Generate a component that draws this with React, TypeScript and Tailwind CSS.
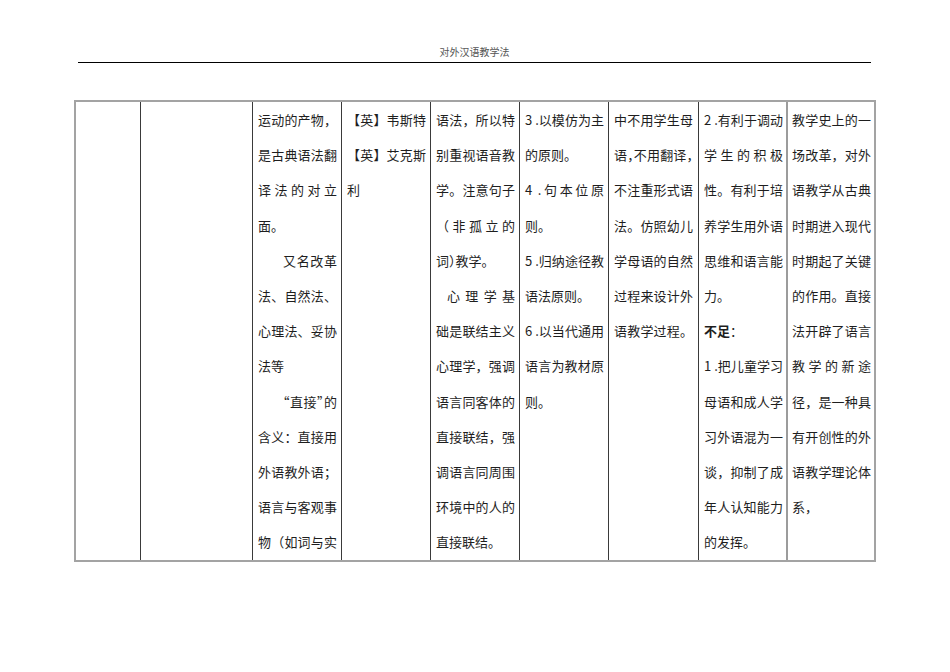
type Line = {
  t: React.ReactNode;
  j?: boolean; // stretch the line across the cell
  indent?: 'two' | 'one';
  halt?: boolean; // half-width punctuation
};

const col3: Line[] = [
  { t: '运动的产物，', j: true },
  { t: '是古典语法翻', j: true },
  { t: '译法的对立', j: true },
  { t: '面。' },
  { t: '又名改革', j: true, indent: 'two' },
  { t: '法、自然法、', j: true },
  { t: '心理法、妥协', j: true },
  { t: '法等' },
  { t: '“直接”的', j: true, indent: 'two', halt: true },
  { t: '含义：直接用', j: true },
  { t: '外语教外语；', j: true },
  { t: '语言与客观事', j: true },
  { t: '物（如词与实', j: true },
];

const col4: Line[] = [
  { t: '【英】韦斯特', j: true },
  { t: '【英】艾克斯', j: true },
  { t: '利' },
];

const col5: Line[] = [
  { t: '语法，所以特', j: true },
  { t: '别重视语音教', j: true },
  { t: '学。注意句子', j: true },
  { t: '（非孤立的', j: true },
  { t: '词）教学。', halt: true },
  { t: '心理学基', j: true, indent: 'one' },
  { t: '础是联结主义', j: true },
  { t: '心理学，强调', j: true },
  { t: '语言同客体的', j: true },
  { t: '直接联结，强', j: true },
  { t: '调语言同周围', j: true },
  { t: '环境中的人的', j: true },
  { t: '直接联结。' },
];

const col6: Line[] = [
  { t: '3 .以模仿为主', j: true },
  { t: '的原则。' },
  { t: '4 .句本位原', j: true },
  { t: '则。' },
  { t: '5 .归纳途径教', j: true },
  { t: '语法原则。' },
  { t: '6 .以当代通用', j: true },
  { t: '语言为教材原', j: true },
  { t: '则。' },
];

const col7: Line[] = [
  { t: '中不用学生母', j: true },
  { t: '语，不用翻译，', j: true, halt: true },
  { t: '不注重形式语', j: true },
  { t: '法。仿照幼儿', j: true },
  { t: '学母语的自然', j: true },
  { t: '过程来设计外', j: true },
  { t: '语教学过程。', j: true },
];

const col8: Line[] = [
  { t: '2 .有利于调动', j: true },
  { t: '学生的积极', j: true },
  { t: '性。有利于培', j: true },
  { t: '养学生用外语', j: true },
  { t: '思维和语言能', j: true },
  { t: '力。' },
  {
    t: (
      <>
        <span className="font-bold">不足</span>：
      </>
    ),
    halt: true,
  },
  { t: '1 .把儿童学习', j: true },
  { t: '母语和成人学', j: true },
  { t: '习外语混为一', j: true },
  { t: '谈，抑制了成', j: true },
  { t: '年人认知能力', j: true },
  { t: '的发挥。' },
];

const col9: Line[] = [
  { t: '教学史上的一', j: true },
  { t: '场改革，对外', j: true },
  { t: '语教学从古典', j: true },
  { t: '时期进入现代', j: true },
  { t: '时期起了关键', j: true },
  { t: '的作用。直接', j: true },
  { t: '法开辟了语言', j: true },
  { t: '教学的新途', j: true },
  { t: '径，是一种具', j: true },
  { t: '有开创性的外', j: true },
  { t: '语教学理论体', j: true },
  { t: '系，' },
];

function TextCell({ lines, wide }: { lines: Line[]; wide?: boolean }) {
  return (
    <div
      className={
        wide
          ? 'border-l-2 border-[#9c9c9c] pl-[4px]'
          : 'border-l border-[#3a3a3a] pl-[5px]'
      }
    >
      <div className="w-[79px]">
        {lines.map((l, i) => (
          <div
            key={i}
            className={[
              'whitespace-normal',
              l.j ? 'text-justify [text-align-last:justify]' : 'text-left',
              l.indent === 'two' ? 'pl-[25px]' : '',
              l.indent === 'one' ? 'pl-[11px]' : '',
              l.halt ? "[font-feature-settings:'halt']" : '',
            ].join(' ')}
          >
            {l.t}
          </div>
        ))}
      </div>
    </div>
  );
}

export default function App() {
  return (
    <div className="w-[950px] h-[672px] bg-white font-['Noto_Sans_CJK_SC',sans-serif] text-[#1e1e1e]">
      {/* running header */}
      <div className="ml-[78px] w-[793px] pt-[44px] border-b border-black text-center text-[10px] leading-[18px] text-[#555] font-['Liberation_Serif','Noto_Sans_CJK_SC',serif]">
        对外汉语教学法
      </div>

      {/* table fragment */}
      <div className="mt-[37px] ml-[74px] w-[802px] border-2 border-[#a3a3a3] grid grid-cols-[64px_112px_89px_89px_89px_89px_90px_88px_88px] text-[13px] leading-[35.2px]">
        <div />
        <div className="border-l border-[#3a3a3a]" />
        <TextCell lines={col3} />
        <TextCell lines={col4} />
        <TextCell lines={col5} />
        <TextCell lines={col6} />
        <TextCell lines={col7} />
        <TextCell lines={col8} />
        <TextCell lines={col9} wide />
      </div>
    </div>
  );
}
